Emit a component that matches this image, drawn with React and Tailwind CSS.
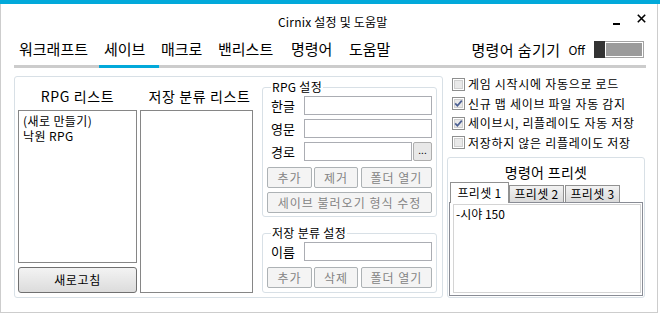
import React from 'react';

const tabs = [
  { name: '워크래프트', cls: 'w-[85px] pl-[5px]' },
  { name: '세이브', cls: 'w-[60px] pl-[5px]' },
  { name: '매크로', cls: 'w-[54px] pl-[2px]' },
  { name: '밴리스트', cls: 'w-[73px] pl-[5px]' },
  { name: '명령어', cls: 'w-[58px] pl-[5px]' },
  { name: '도움말', cls: 'w-[56px] pl-[5px]' },
];

const checks = [
  { label: '게임 시작시에 자동으로 로드', on: false },
  { label: '신규 맵 세이브 파일 자동 감지', on: true },
  { label: '세이브시, 리플레이도 자동 저장', on: true },
  { label: '저장하지 않은 리플레이도 저장', on: false },
];

const CheckBox = ({ checked }) => (
  <svg width="13" height="13" viewBox="0 0 13 13" className="shrink-0">
    <rect x="0.5" y="0.5" width="12" height="12" fill="#fff" stroke="#8e8f8f" />
    <rect x="2.5" y="2.5" width="8" height="8" fill="#e9e9e9" stroke="#cfcfcf" />
    {checked && (
      <path d="M3.2 6.4 L5.4 8.8 L9.8 3.6" fill="none" stroke="#4b5f93" strokeWidth="1.7" />
    )}
  </svg>
);

// disabled winforms style button
const DisBtn = ({ className, children }) => (
  <div
    className={`flex h-[21px] items-center justify-center whitespace-nowrap rounded-[2px] border border-[#adb2b5] bg-[#f4f4f4] text-[12px] tracking-[1px] text-[#848484] ${className}`}
  >
    {children}
  </div>
);

const Field = ({ label, children }) => (
  <div className="flex h-[19px] items-center">
    <span className="w-[37px] pl-[4px] text-[13px] leading-[19px]">{label}</span>
    {children}
  </div>
);

const Input = ({ className = 'w-[128px]' }) => (
  <div className={`h-[19px] border border-[#abadb3] bg-white ${className}`} />
);

const App = () => {
  const active = 1;

  return (
    <div className="h-[315px] w-[660px] overflow-hidden bg-white font-['Noto_Sans_CJK_KR','Noto_Sans',sans-serif] text-black">
      <div className="h-[4px] w-full bg-[#02a9da]" />
      <div className="h-[309px] w-[658px] border-x border-b border-[#cdcdcd]">
        {/* title bar */}
        <div className="flex h-[36px] items-center">
          <span className="ml-[277px] text-[12px] leading-[16px] tracking-[0.2px]">Cirnix 설정 및 도움말</span>
          <div className="ml-auto flex items-center">
            <div className="mt-[3px] h-[2px] w-[7px] bg-black" />
            <svg width="9" height="9" viewBox="0 0 9 9" className="mb-[7px] ml-[17px] mr-[11px]">
              <path d="M0.8 0.8 L8.2 8.2 M8.2 0.8 L0.8 8.2" stroke="#000" strokeWidth="1.6" />
            </svg>
          </div>
        </div>

        {/* tab strip */}
        <div className="ml-[13px] flex h-[28px] w-[632px] items-start border-b-[3px] border-[#cccccc]">
          <div className="flex items-start">
            {tabs.map((t, i) => (
              <div
                key={t.name}
                className={
                  i === active
                    ? `-mb-[3px] h-[28px] whitespace-nowrap border-b-[3px] border-[#02a9da] text-[15px] leading-[17px] ${t.cls}`
                    : `h-[25px] whitespace-nowrap text-[15px] leading-[17px] ${t.cls}`
                }
              >
                {t.name}
              </div>
            ))}
          </div>
          <div className="ml-auto mr-[2px] mt-[1px] flex items-center">
            <span className="text-[15px] leading-[17px] tracking-[0.4px]">명령어 숨기기</span>
            <span className="ml-[8px] text-[12px] leading-[17px]">Off</span>
            <div className="ml-[9px] flex h-[17px] w-[50px] border border-[#a3a3a3] bg-white">
              <div className="-my-px -ml-px w-[11px] bg-[#333333]" />
              <div className="m-px flex-1 bg-[#9b9b9b]" />
            </div>
          </div>
        </div>

        {/* content */}
        <div className="ml-[13px] mt-[8px] flex">
          {/* left group */}
          <div className="flex h-[222px] w-[429px] rounded-[3px] border border-[#d8e0e6] pl-[3px]">
            <div className="flex w-[119px] flex-col">
              <div className="h-[33px] pt-[11px] text-center text-[14px] leading-[17px] tracking-[0.6px]">RPG 리스트</div>
              <div className="h-[153px] border border-[#868686] pl-[4px] pt-[2px] text-[12px] leading-[15px] tracking-[0.4px]">
                <div>(새로 만들기)</div>
                <div>낙원 RPG</div>
              </div>
              <div className="mt-[4px] flex h-[26px] items-center justify-center rounded-[3px] border border-[#707070] bg-gradient-to-b from-[#f3f3f3] to-[#dcdcdc] text-[12px] tracking-[0.6px]">
                새로고침
              </div>
            </div>

            <div className="ml-[3px] flex w-[113px] flex-col">
              <div className="h-[33px] pt-[11px] text-center text-[14px] leading-[17px]">
                <span className="ml-[6px] whitespace-nowrap tracking-[0.6px]">저장 분류 리스트</span>
              </div>
              <div className="h-[183px] border border-[#868686]" />
            </div>

            <div className="ml-[9px] flex w-[175px] flex-col pt-[3px]">
              <fieldset className="rounded-[3px] border border-[#d8e0e6] px-[4px] pb-[3px]">
                <legend className="ml-[4px] px-[1px] text-[12px] leading-[14px] tracking-[0.3px]">RPG 설정</legend>
                <div className="mt-[2px] flex flex-col gap-[4px]">
                  <Field label="한글">
                    <Input />
                  </Field>
                  <Field label="영문">
                    <Input />
                  </Field>
                  <Field label="경로">
                    <Input className="w-[108px]" />
                    <div className="ml-[1px] flex h-[19px] w-[19px] items-center justify-center rounded-[2px] border border-[#adadad] bg-[#e8e8e8] pb-[4px] text-[10px]">
                      ...
                    </div>
                  </Field>
                </div>
                <div className="mt-[6px] flex">
                  <DisBtn className="w-[45px]">추가</DisBtn>
                  <DisBtn className="ml-[2px] w-[44px]">제거</DisBtn>
                  <DisBtn className="ml-[3px] w-[71px]">폴더 열기</DisBtn>
                </div>
                <DisBtn className="mt-[4px] w-full">세이브 불러오기 형식 수정</DisBtn>
              </fieldset>

              <fieldset className="mt-[9px] rounded-[3px] border border-[#d8e0e6] px-[4px] pb-[4px]">
                <legend className="ml-[4px] px-[1px] text-[12px] leading-[14px] tracking-[0.3px]">저장 분류 설정</legend>
                <div className="mt-[2px]">
                  <Field label="이름">
                    <Input />
                  </Field>
                </div>
                <div className="mt-[6px] flex">
                  <DisBtn className="w-[45px]">추가</DisBtn>
                  <DisBtn className="ml-[2px] w-[44px]">삭제</DisBtn>
                  <DisBtn className="ml-[3px] w-[71px]">폴더 열기</DisBtn>
                </div>
              </fieldset>
            </div>
          </div>

          {/* right column */}
          <div className="ml-[4px] flex w-[198px] flex-col">
            <div className="flex flex-col gap-[3.5px] pl-[5px]">
              {checks.map((c) => (
                <div key={c.label} className="flex h-[16px] items-center">
                  <CheckBox checked={c.on} />
                  <span className="ml-[3px] whitespace-nowrap text-[12px] leading-[16px] tracking-[0.7px]">{c.label}</span>
                </div>
              ))}
            </div>

            <div className="mt-[6.5px] flex h-[141px] flex-col rounded-[3px] border border-[#d8e0e6] px-px pb-px">
              <div className="h-[24px] pt-[6px] text-center text-[14px] leading-[17px] tracking-[0.3px]">명령어 프리셋</div>
              <div className="flex items-end pl-px">
                <div className="relative z-10 -mb-px h-[21px] w-[59px] border border-b-0 border-[#919191] bg-white text-center text-[12px] leading-[19px] tracking-[0.3px]">
                  프리셋 1
                </div>
                <div className="h-[17px] w-[55px] border border-b-0 border-[#919191] bg-gradient-to-b from-[#f2f2f2] to-[#dadada] text-center text-[12px] leading-[16px] tracking-[0.3px]">
                  프리셋 2
                </div>
                <div className="ml-px h-[17px] w-[55px] border border-b-0 border-[#919191] bg-gradient-to-b from-[#f2f2f2] to-[#dadada] text-center text-[12px] leading-[16px] tracking-[0.3px]">
                  프리셋 3
                </div>
              </div>
              <div className="flex-1 border border-[#898c95] bg-white pb-[2px] pl-[3px] pr-px pt-px">
                <div className="h-full border border-[#d4d4d4] pl-[2px] pt-[1px] text-[12px] leading-[16px]">-시야 150</div>
              </div>
            </div>
          </div>
        </div>
      </div>
    </div>
  );
};

export default App;
